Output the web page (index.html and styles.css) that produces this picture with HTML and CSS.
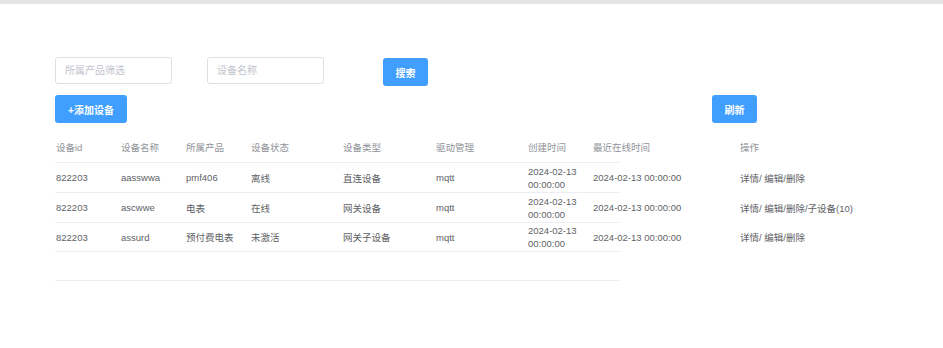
FILE: index.html
```html
<!DOCTYPE html>
<html lang="zh-CN">
<head>
    <meta charset="UTF-8">
    <meta name="viewport" content="width=device-width, initial-scale=1.0">
    <title>设备管理</title>
    <link rel="stylesheet" href="styles.css">
</head>
<body>
    <div class="topbar"></div>
    <div class="page">
        <div class="filters">
            <input class="field" type="text" placeholder="所属产品筛选">
            <input class="field" type="text" placeholder="设备名称">
            <button class="btn btn-search" type="button">搜索</button>
        </div>
        <div class="toolbar">
            <button class="btn btn-add" type="button">+添加设备</button>
            <button class="btn btn-refresh" type="button">刷新</button>
        </div>

        <div class="table">
            <div class="row head">
                <div>设备id</div>
                <div>设备名称</div>
                <div>所属产品</div>
                <div>设备状态</div>
                <div>设备类型</div>
                <div>驱动管理</div>
                <div>创建时间</div>
                <div>最近在线时间</div>
                <div>操作</div>
            </div>
            <div class="row">
                <div>822203</div>
                <div>aasswwa</div>
                <div>pmf406</div>
                <div>离线</div>
                <div>直连设备</div>
                <div>mqtt</div>
                <div class="wrap">2024-02-13<br>00:00:00</div>
                <div>2024-02-13 00:00:00</div>
                <div>详情/ 编辑/删除</div>
            </div>
            <div class="row">
                <div>822203</div>
                <div>ascwwe</div>
                <div>电表</div>
                <div>在线</div>
                <div>网关设备</div>
                <div>mqtt</div>
                <div class="wrap">2024-02-13<br>00:00:00</div>
                <div>2024-02-13 00:00:00</div>
                <div>详情/ 编辑/删除/子设备(10)</div>
            </div>
            <div class="row short">
                <div>822203</div>
                <div>assurd</div>
                <div>预付费电表</div>
                <div>未激活</div>
                <div>网关子设备</div>
                <div>mqtt</div>
                <div class="wrap">2024-02-13<br>00:00:00</div>
                <div>2024-02-13 00:00:00</div>
                <div>详情/ 编辑/删除</div>
            </div>
            <div class="row empty"></div>
        </div>
    </div>
</body>
</html>
```

FILE: styles.css
```css
body {
    margin: 0;
    font-family: "Liberation Sans", "Noto Sans CJK SC", sans-serif;
    font-size: 9.5px;
    color: #606266;
    background: #fff;
}
.topbar {
    height: 4px;
    background: #e4e4e4;
}
.page {
    padding: 53px 0 0 55px;
}
.filters {
    display: flex;
    align-items: flex-start;
}
.field {
    box-sizing: border-box;
    width: 117px;
    height: 27px;
    padding: 0 9px;
    border: 1px solid #dcdfe6;
    border-radius: 3px;
    font-family: inherit;
    font-size: 10px;
    color: #606266;
    outline: none;
}
.field::placeholder {
    color: #c0c4cc;
}
.field + .field {
    margin-left: 35px;
}
.btn {
    box-sizing: border-box;
    height: 28px;
    border: none;
    border-radius: 3px;
    background: #409eff;
    color: #fff;
    font-family: inherit;
    font-size: 10px;
    font-weight: bold;
    padding: 0;
    cursor: pointer;
}
.btn-search {
    width: 45px;
    margin: 1px 0 0 59px;
}
.toolbar {
    display: flex;
    justify-content: space-between;
    width: 702px;
    margin-top: 9px;
}
.btn-add {
    width: 72px;
}
.btn-refresh {
    width: 45px;
}
.table {
    width: 565px;
    margin-top: 8px;
}
.row {
    display: grid;
    grid-template-columns: 65px 65px 65px 92px 93px 92px 65px 147px 200px;
    align-items: center;
    height: 30px;
    border-bottom: 1px solid #ebeef5;
    box-sizing: border-box;
}
.row > div {
    padding-left: 1px;
    white-space: nowrap;
}
.row.head {
    height: 32px;
    color: #909399;
}
.row.short, .row.empty {
    height: 29px;
}
.wrap {
    line-height: 13px;
}
```
